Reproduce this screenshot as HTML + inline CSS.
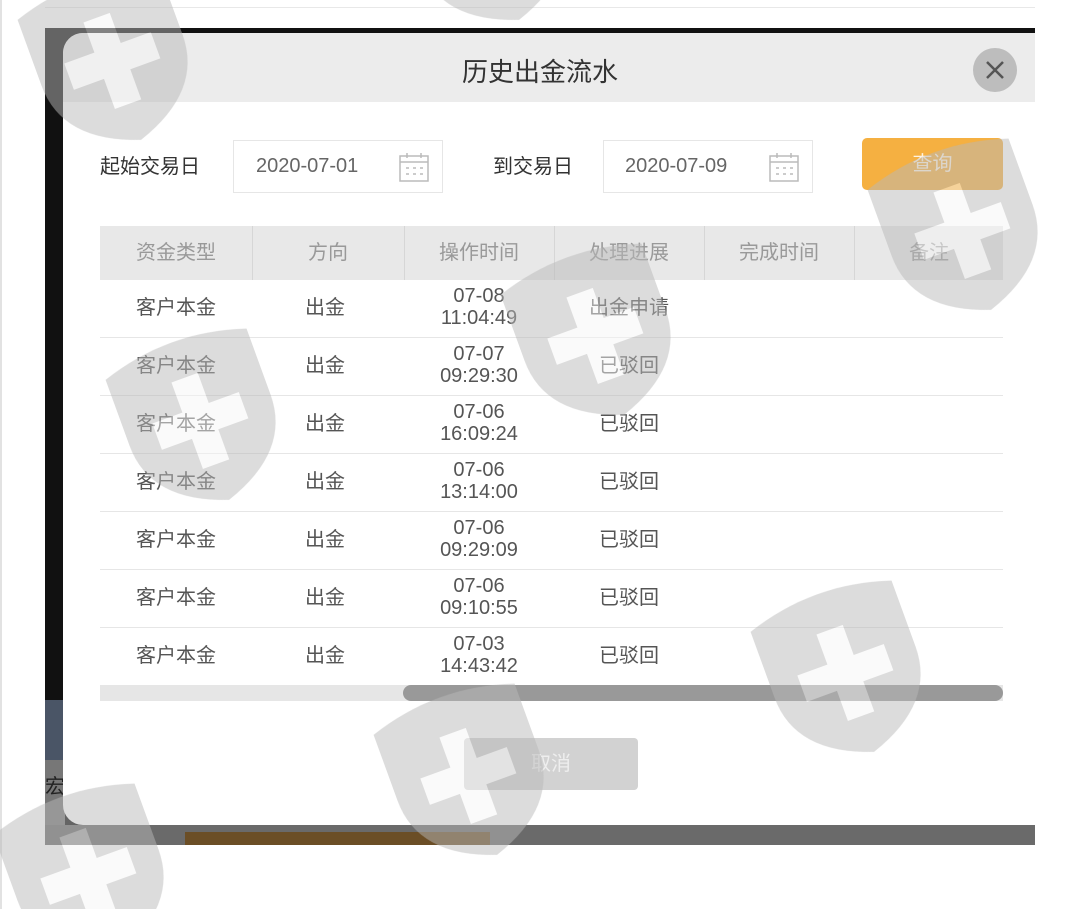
<!DOCTYPE html>
<html><head><meta charset="utf-8"><style>
*{margin:0;padding:0;box-sizing:border-box}
html,body{width:1080px;height:909px;overflow:hidden}
body{background:#fff;position:relative;font-family:"Liberation Sans","Noto Sans CJK SC",sans-serif;color:#555}
.abs{position:absolute}
.cell{position:absolute;width:152px;text-align:center;font-size:20px;line-height:22px}
</style></head><body>
<div class="abs" style="left:0;top:0;width:2px;height:909px;background:#e2e2e2"></div>
<div class="abs" style="left:45px;top:7px;width:990px;height:1px;background:#e8e8e8"></div>
<div class="abs" style="left:45px;top:28px;width:990px;height:817px;background:#111"></div>
<div class="abs" style="left:45px;top:700px;width:20px;height:60px;background:#4a5566"></div>
<div class="abs" style="left:45px;top:760px;width:20px;height:65px;background:#777"></div>
<div class="abs" style="left:45px;top:770px;font-size:20px;color:#222">宏</div>
<div class="abs" style="left:45px;top:825px;width:990px;height:20px;background:#6a6a6a"></div>
<div class="abs" style="left:185px;top:832px;width:305px;height:13px;background:#6b4e26"></div>
<div class="abs" style="left:63px;top:33px;width:972px;height:792px;background:#fff;border-radius:20px 0 0 20px;overflow:hidden">
  <div class="abs" style="left:0;top:0;width:972px;height:69px;background:#ececec"></div>
</div>
<div class="abs" style="left:0;top:52px;width:1080px;text-align:center;font-size:26px;color:#333">历史出金流水</div>
<div class="abs" style="left:973px;top:48px;width:44px;height:44px;border-radius:50%;background:#bdbdbd"></div>
<svg class="abs" style="left:973px;top:48px" width="44" height="44"><path d="M14 14L30 30M30 14L14 30" stroke="#555" stroke-width="2.5"/></svg>

<div class="abs" style="left:100px;top:150px;font-size:20px;color:#333">起始交易日</div>
<div class="abs" style="left:233px;top:140px;width:210px;height:53px;border:1px solid #e6e6e6"></div>
<div class="abs" style="left:256px;top:155px;font-size:20px;color:#666">2020-07-01</div>
<div class="abs" style="left:493px;top:150px;font-size:20px;color:#333">到交易日</div>
<div class="abs" style="left:603px;top:140px;width:210px;height:53px;border:1px solid #e6e6e6"></div>
<div class="abs" style="left:625px;top:155px;font-size:20px;color:#666">2020-07-09</div>
<svg class="abs" style="left:398px;top:151px" width="32" height="32"><g stroke="#bbb" fill="none" stroke-width="1.5"><rect x="2" y="5" width="28" height="25"/><path d="M2 11H30M9 2V7M23 2V7M8 17h3M15 17h3M22 17h3M8 23h3M15 23h3M22 23h3"/></g></svg>
<svg class="abs" style="left:768px;top:151px" width="32" height="32"><g stroke="#bbb" fill="none" stroke-width="1.5"><rect x="2" y="5" width="28" height="25"/><path d="M2 11H30M9 2V7M23 2V7M8 17h3M15 17h3M22 17h3M8 23h3M15 23h3M22 23h3"/></g></svg>
<div class="abs" style="left:862px;top:138px;width:141px;height:52px;background:#f5b041;border-radius:5px;font-size:20px;text-align:center;line-height:52px;color:#fff3e0">查询</div>

<div class="abs" style="left:100px;top:226px;width:903px;height:54px;background:#e8e8e8"></div>
<div class="abs" style="left:252px;top:226px;width:1px;height:54px;background:#d6d6d6"></div>
<div class="abs" style="left:404px;top:226px;width:1px;height:54px;background:#d6d6d6"></div>
<div class="abs" style="left:554px;top:226px;width:1px;height:54px;background:#d6d6d6"></div>
<div class="abs" style="left:704px;top:226px;width:1px;height:54px;background:#d6d6d6"></div>
<div class="abs" style="left:854px;top:226px;width:1px;height:54px;background:#d6d6d6"></div>
<div class="cell" style="left:100px;top:242px;color:#999">资金类型</div>
<div class="cell" style="left:252px;top:242px;color:#999">方向</div>
<div class="cell" style="left:403px;top:242px;color:#999">操作时间</div>
<div class="cell" style="left:553px;top:242px;color:#999">处理进展</div>
<div class="cell" style="left:703px;top:242px;color:#999">完成时间</div>
<div class="cell" style="left:853px;top:242px;color:#999">备注</div>

<div id="rows"></div>
<script>
var d=[["07-08","11:04:49","出金申请"],["07-07","09:29:30","已驳回"],["07-06","16:09:24","已驳回"],["07-06","13:14:00","已驳回"],["07-06","09:29:09","已驳回"],["07-06","09:10:55","已驳回"],["07-03","14:43:42","已驳回"]];
var h="";d.forEach(function(r,i){var t=280+i*58;
h+='<div class="cell" style="left:100px;top:'+(t+17)+'px">客户本金</div><div class="cell" style="left:265px;width:120px;top:'+(t+17)+'px">出金</div><div class="cell" style="left:403px;top:'+(t+5)+'px">'+r[0]+'<br>'+r[1]+'</div><div class="cell" style="left:553px;top:'+(t+17)+'px">'+r[2]+'</div>';
if(i<6)h+='<div class="abs" style="left:100px;top:'+(t+57)+'px;width:903px;height:1px;background:#e6e6e6"></div>';});
document.getElementById("rows").innerHTML=h;
</script>
<div class="abs" style="left:100px;top:685px;width:903px;height:16px;background:#e6e6e6"></div>
<div class="abs" style="left:403px;top:685px;width:600px;height:16px;background:#999;border-radius:8px"></div>
<div class="abs" style="left:464px;top:738px;width:174px;height:52px;background:#d2d2d2;border-radius:4px;text-align:center;line-height:52px;font-size:20px;color:#eee">取消</div>

<svg class="abs" style="left:0;top:0" width="1080" height="909">
<defs><g id="s"><path d="M-75 -70Q0 -95 75 -70L75 0Q75 60 0 85Q-75 60 -75 0Z" fill="#b8b8b8"/><path d="M-14 -45h28v32h32v28h-32v32h-28v-32h-32v-28h32z" fill="#fff" opacity=".85"/></g></defs>
<g opacity=".5">
<use href="#s" transform="translate(112,60) rotate(-20)"/>
<use href="#s" transform="translate(490,-60) rotate(-20)"/>
<use href="#s" transform="translate(962,230) rotate(-20)"/>
<use href="#s" transform="translate(595,335) rotate(-20)"/>
<use href="#s" transform="translate(200,420) rotate(-20)"/>
<use href="#s" transform="translate(845,672) rotate(-20)"/>
<use href="#s" transform="translate(468,775) rotate(-20)"/>
<use href="#s" transform="translate(88,875) rotate(-20)"/>
</g></svg>
</body></html>
